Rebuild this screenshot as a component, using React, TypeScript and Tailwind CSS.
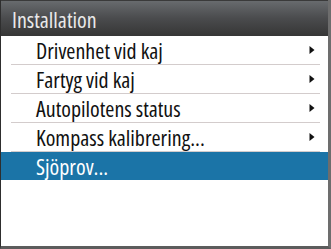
const items = [
  { label: "Drivenhet vid kaj", arrow: true },
  { label: "Fartyg vid kaj", arrow: true },
  { label: "Autopilotens status", arrow: true },
  { label: "Kompass kalibrering...", arrow: true },
  { label: "Sjöprov...", arrow: false, selected: true },
];

const Arrow = () => (
  <svg width="6" height="10" viewBox="0 0 6 10" className="shrink-0">
    <path d="M0.5 1 L5.5 5 L0.5 9 Z" fill="#111" />
  </svg>
);

export default function App() {
  return (
    <div
      className="w-[331px] h-[249px] bg-white flex flex-col border-l-[1px] border-l-[#2e2e2e] border-r-[3px] border-r-[#6d6d6d] border-b-[3px] border-b-[#5c5c5c] overflow-hidden"
      style={{ fontFamily: '"Open Sans", "Noto Sans", sans-serif' }}
    >
      {/* Header */}
      <div className="h-[36px] shrink-0 flex items-center pl-[11px] bg-gradient-to-b from-[#686b6e] via-[#4a4b4d] to-[#363636] border-t border-t-[#3a3a3a]">
        <span className="text-[22px] leading-none text-[#e9e9e9] font-stretch-condensed">
          Installation
        </span>
      </div>

      {/* Menu */}
      <div className="flex flex-col">
        {items.map((it, i) => (
          <div key={it.label} className="flex flex-col">
            <div
              className={
                it.selected
                  ? "h-[28px] flex items-center pl-[35px] pr-[13px] bg-[#1b74a7] text-white"
                  : "h-[28px] flex items-center pl-[35px] pr-[13px] text-[#111]"
              }
            >
              <span className="flex-1 text-[22px] leading-none font-stretch-condensed">{it.label}</span>
              {it.arrow && <Arrow />}
            </div>
            {i < items.length - 1 && <div className="h-px ml-[10px] mr-[8px] bg-[#d3cccc]" />}
          </div>
        ))}
      </div>
    </div>
  );
}
